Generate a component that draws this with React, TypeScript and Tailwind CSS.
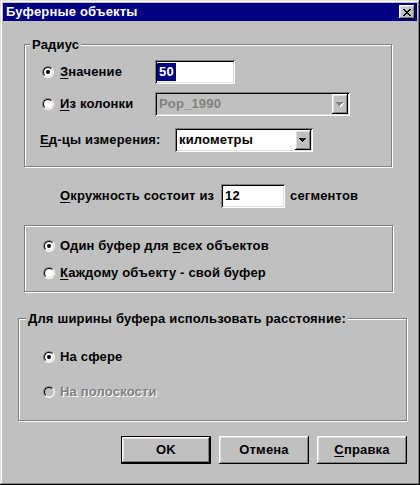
import clsx from "clsx";

const raised =
  "shadow-[inset_-1px_-1px_#000000,inset_1px_1px_#ffffff,inset_-2px_-2px_#808080,inset_2px_2px_#dfdfdf]";
const sunken =
  "shadow-[inset_1px_1px_#808080,inset_-1px_-1px_#ffffff,inset_2px_2px_#000000,inset_-2px_-2px_#dfdfdf]";
const etched =
  "border border-[#808080] shadow-[inset_1px_1px_#ffffff,1px_1px_#ffffff]";

function Radio({ checked, disabled }: { checked?: boolean; disabled?: boolean }) {
  return (
    <span className="flex w-[12px] h-[12px] shrink-0 rounded-full border border-t-[#808080] border-l-[#808080] border-r-white border-b-white">
      <span
        className={clsx(
          "flex w-full h-full items-center justify-center rounded-full border border-t-black border-l-black border-r-[#dfdfdf] border-b-[#dfdfdf]",
          disabled ? "bg-[#c0c0c0]" : "bg-white"
        )}
      >
        {checked && <span className="w-[4px] h-[4px] rounded-full bg-black" />}
      </span>
    </span>
  );
}

function Arrow({ disabled }: { disabled?: boolean }) {
  const tri = "M0 0h7v1h-1v1h-1v1h-1v1h-1v-1h-1v-1h-1v-1h-1z";
  return (
    <svg width="8" height="5" viewBox="0 0 8 5" shapeRendering="crispEdges">
      {disabled && <path d={tri} transform="translate(1 1)" fill="#ffffff" />}
      <path d={tri} fill={disabled ? "#808080" : "#000000"} />
    </svg>
  );
}

function Combo({ value, width, disabled }: { value: string; width: string; disabled?: boolean }) {
  return (
    <div
      className={clsx(
        "flex h-[24px] p-[2px]",
        width,
        sunken,
        disabled ? "bg-[#c0c0c0] text-[#808080]" : "bg-white"
      )}
    >
      <span className="flex-1 flex items-center pl-[2px]">{value}</span>
      <span className={clsx("flex w-[16px] items-center justify-center bg-[#c0c0c0]", raised)}>
        <Arrow disabled={disabled} />
      </span>
    </div>
  );
}

function Legend({ text, ml }: { text: string; ml: string }) {
  return (
    <span className={clsx("block w-fit -mt-[8px] h-[16px] px-[2px] bg-[#c0c0c0]", ml)}>
      {text}
    </span>
  );
}

export default function App() {
  return (
    <div className="w-[420px] h-[485px] bg-[#c0c0c0] p-[3px] font-['Liberation_Sans',Arial,sans-serif] text-[13px] font-bold leading-[16px] tracking-[0.17px] text-black shadow-[inset_-1px_-1px_#000000,inset_1px_1px_#dfdfdf,inset_-2px_-2px_#808080,inset_2px_2px_#ffffff]">
      {/* title bar */}
      <div className="h-[18px] bg-[#000080] flex items-center justify-between pl-[3px] pr-[2px]">
        <span className="text-white">Буферные объекты</span>
        <span className={clsx("flex w-[16px] h-[14px] items-center justify-center bg-[#c0c0c0]", raised)}>
          <svg width="8" height="7" viewBox="0 0 8 7" shapeRendering="crispEdges">
            <path
              d="M0 0h2v1h-2zM6 0h2v1h-2zM1 1h2v1h-2zM5 1h2v1h-2zM2 2h4v1h-4zM3 3h2v1h-2zM2 4h4v1h-4zM1 5h2v1h-2zM5 5h2v1h-2zM0 6h2v1h-2zM6 6h2v1h-2z"
              fill="#000000"
            />
          </svg>
        </span>
      </div>

      <div className="flex flex-col">
        {/* Радиус */}
        <div className={clsx("ml-[21px] mt-[23px] w-[368px] h-[123px]", etched)}>
          <Legend text="Радиус" ml="ml-[5px]" />
          <div className="mt-[7px] h-[24px] flex items-center pl-[17px]">
            <label className="w-[113px] flex items-center gap-[6px]">
              <Radio checked />
              <span>
                <u className="underline-offset-2">З</u>начение
              </span>
            </label>
            <div className={clsx("w-[80px] h-[24px] bg-white p-[2px] flex items-center", sunken)}>
              <span className="bg-[#000080] text-white px-[2px] leading-[18px]">50</span>
            </div>
          </div>
          <div className="mt-[8px] h-[24px] flex items-center pl-[17px]">
            <label className="w-[113px] flex items-center gap-[6px]">
              <Radio />
              <span>
                <u className="underline-offset-2">И</u>з колонки
              </span>
            </label>
            <Combo value="Pop_1990" width="w-[195px]" disabled />
          </div>
          <div className="mt-[12px] h-[24px] flex items-center pl-[15px]">
            <span className="w-[135px]">
              <u className="underline-offset-2">Е</u>д-цы измерения:
            </span>
            <Combo value="километры" width="w-[138px]" />
          </div>
        </div>

        {/* сегменты */}
        <div className="mt-[17px] ml-[57px] h-[24px] flex items-center">
          <span className="w-[161px]">
            <u className="underline-offset-2">О</u>кружность состоит из
          </span>
          <div className={clsx("w-[64px] h-[24px] bg-white p-[2px] pl-[4px] flex items-center", sunken)}>
            12
          </div>
          <span className="ml-[5px]">сегментов</span>
        </div>

        {/* буфер */}
        <div className={clsx("ml-[21px] mt-[17px] w-[369px] h-[67px] flex flex-col pt-[10px] gap-[7px] pl-[18px]", etched)}>
          <label className="h-[20px] flex items-center gap-[5px]">
            <Radio checked />
            <span>
              Один буфер для <u className="underline-offset-2">в</u>сех объектов
            </span>
          </label>
          <label className="h-[20px] flex items-center gap-[5px]">
            <Radio />
            <span>
              <u className="underline-offset-2">К</u>аждому объекту - свой буфер
            </span>
          </label>
        </div>

        {/* расстояние */}
        <div className={clsx("ml-[15px] mt-[26px] w-[389px] h-[103px]", etched)}>
          <Legend text="Для ширины буфера использовать расстояние:" ml="ml-[7px]" />
          <label className="mt-[20px] h-[20px] flex items-center gap-[5px] pl-[24px]">
            <Radio checked />
            <span>На сфере</span>
          </label>
          <label className="mt-[15px] h-[20px] flex items-center gap-[5px] pl-[24px]">
            <Radio disabled />
            <span className="text-[#808080] [text-shadow:1px_1px_0_#ffffff]">На полоскости</span>
          </label>
        </div>

        {/* кнопки */}
        <div className="mt-[15px] ml-[118px] flex gap-[8px]">
          <button className={clsx("w-[90px] h-[28px] bg-[#c0c0c0] border border-black", raised)}>OK</button>
          <button className={clsx("w-[90px] h-[28px] bg-[#c0c0c0]", raised)}>Отмена</button>
          <button className={clsx("w-[90px] h-[28px] bg-[#c0c0c0]", raised)}>
            <u className="underline-offset-2">С</u>правка
          </button>
        </div>
      </div>
    </div>
  );
}
